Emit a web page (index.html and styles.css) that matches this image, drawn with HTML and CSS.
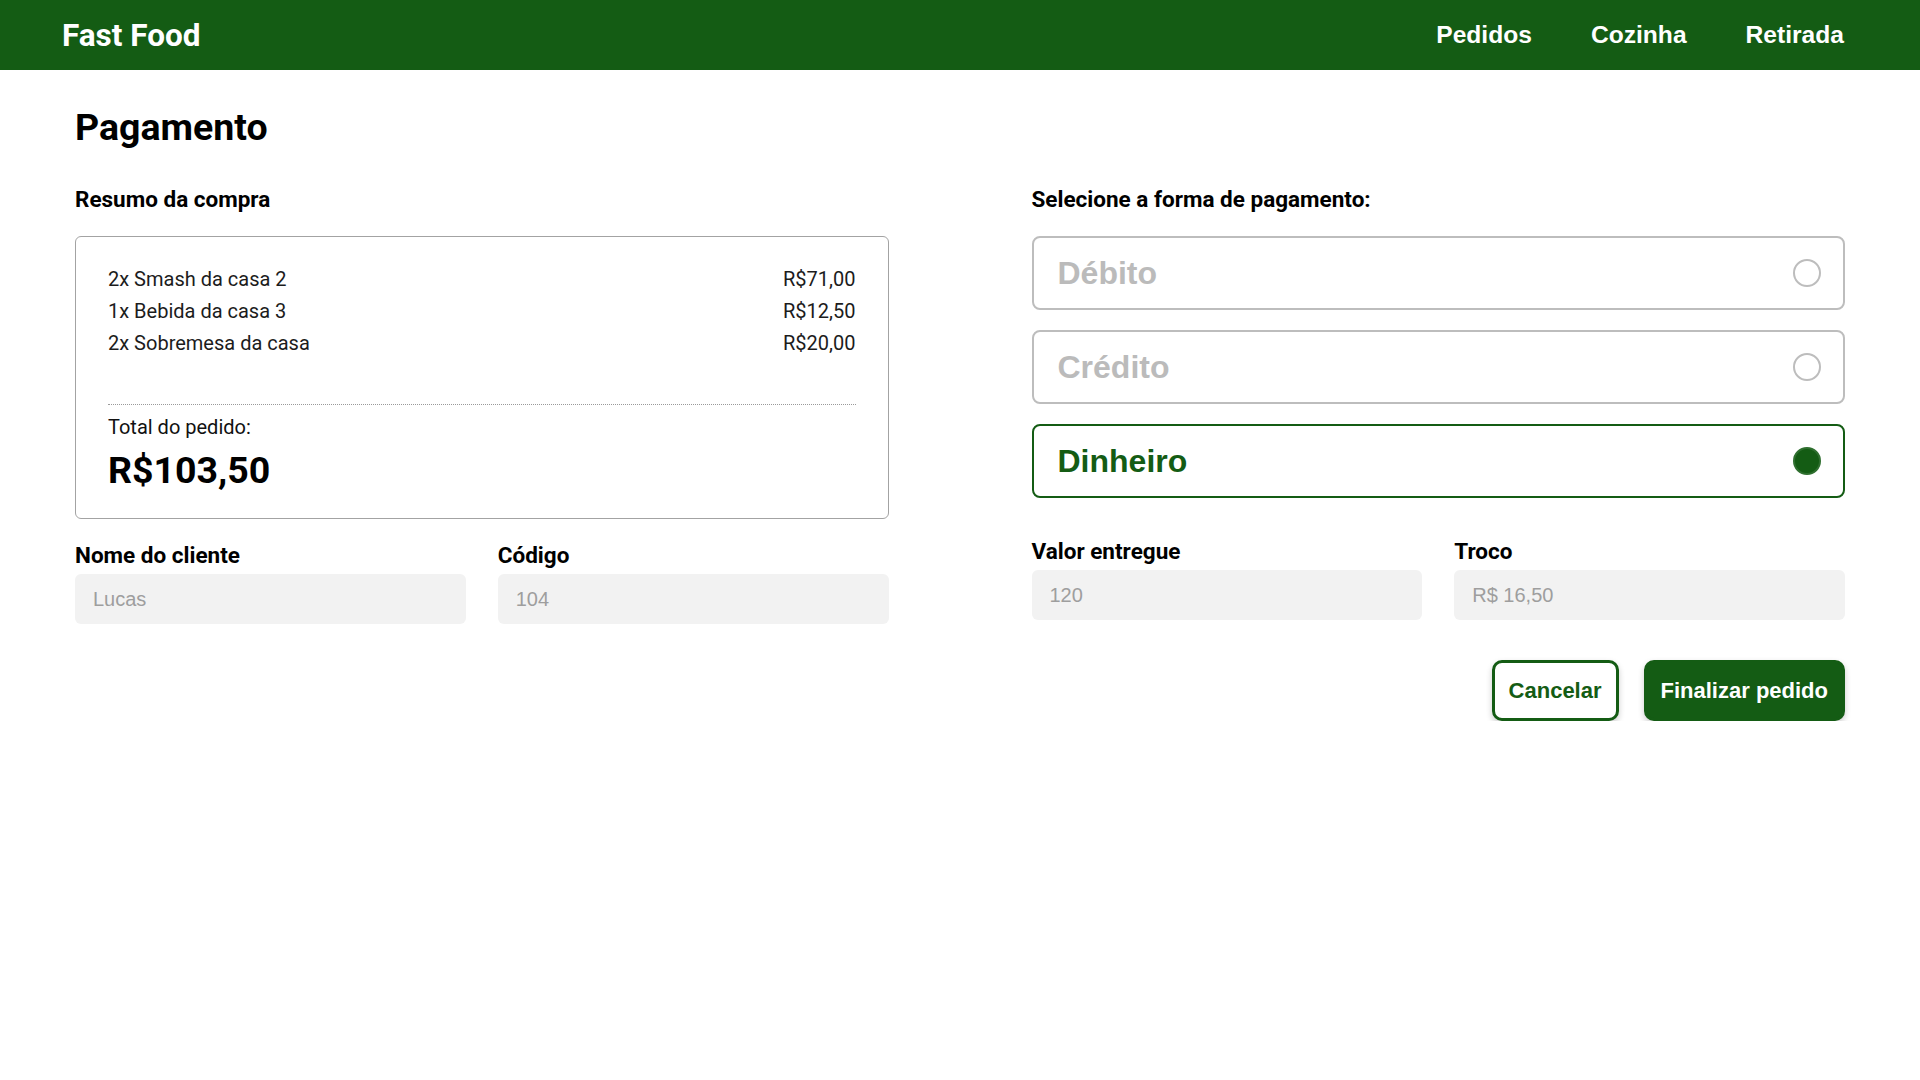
FILE: index.html
```html
<!DOCTYPE html>
<html lang="pt-BR">
<head>
<meta charset="utf-8">
<title>Fast Food - Pagamento</title>
<link rel="stylesheet" href="styles.css">
</head>
<body>
<header class="topbar">
  <div class="brand">Fast Food</div>
  <nav class="nav">
    <a class="nav-link" href="#">Pedidos</a>
    <a class="nav-link" href="#">Cozinha</a>
    <a class="nav-link" href="#">Retirada</a>
  </nav>
</header>
<main class="page">
  <h1 class="page-title">Pagamento</h1>
  <div class="columns">
    <section class="col">
      <h2 class="section-title">Resumo da compra</h2>
      <div class="summary">
        <ul class="items">
          <li class="item"><span>2x Smash da casa 2</span><span>R$71,00</span></li>
          <li class="item"><span>1x Bebida da casa 3</span><span>R$12,50</span></li>
          <li class="item"><span>2x Sobremesa da casa</span><span>R$20,00</span></li>
        </ul>
        <div class="divider"></div>
        <div class="total-label">Total do pedido:</div>
        <div class="total-value">R$103,50</div>
      </div>
      <div class="fields fields-left">
        <div class="field">
          <label class="field-label">Nome do cliente</label>
          <div class="input">Lucas</div>
        </div>
        <div class="field">
          <label class="field-label">Código</label>
          <div class="input">104</div>
        </div>
      </div>
    </section>
    <section class="col">
      <h2 class="section-title">Selecione a forma de pagamento:</h2>
      <div class="options">
        <div class="option"><span class="option-name">Débito</span><span class="radio"></span></div>
        <div class="option"><span class="option-name">Crédito</span><span class="radio"></span></div>
        <div class="option option-active"><span class="option-name">Dinheiro</span><span class="radio radio-on"></span></div>
      </div>
      <div class="fields fields-right">
        <div class="field">
          <label class="field-label">Valor entregue</label>
          <div class="input">120</div>
        </div>
        <div class="field">
          <label class="field-label">Troco</label>
          <div class="input">R$ 16,50</div>
        </div>
      </div>
      <div class="actions">
        <button class="btn btn-outline">Cancelar</button>
        <button class="btn btn-solid">Finalizar pedido</button>
      </div>
    </section>
  </div>
</main>
</body>
</html>
```
FILE: styles.css
```css
* { box-sizing: border-box; }

body {
  margin: 0;
  background: #ffffff;
  font-family: Roboto, "Liberation Sans", Arial, sans-serif;
  color: #111;
}

.topbar {
  height: 70px;
  background: #145c14;
  display: flex;
  align-items: center;
  justify-content: space-between;
  padding: 0 76px 0 62px;
}

.brand {
  font-family: Roboto, sans-serif;
  font-weight: 700;
  font-size: 31.5px;
  color: #fff;
}

.nav {
  display: flex;
  gap: 59px;
}

.nav-link {
  font-family: "Liberation Sans", Arial, sans-serif;
  font-weight: 700;
  font-size: 24.6px;
  color: #fff;
  text-decoration: none;
}

.page {
  padding: 35px 75px 0 75px;
}

.page-title {
  margin: 0;
  font-family: Roboto, sans-serif;
  font-weight: 700;
  font-size: 37.5px;
  color: #000;
}

.columns {
  margin-top: 37px;
  display: grid;
  grid-template-columns: 1fr 1fr;
  column-gap: 143px;
}

.section-title {
  margin: 0 0 24px;
  font-family: Roboto, sans-serif;
  font-weight: 700;
  font-size: 22.5px;
  color: #000;
}

.summary {
  border: 1px solid #a3a3a3;
  border-radius: 6px;
  padding: 26px 32px 26px 32px;
}

.items {
  list-style: none;
  margin: 0;
  padding: 0;
}

.item {
  display: flex;
  justify-content: space-between;
  font-size: 20px;
  line-height: 32px;
  color: #1c1c1c;
}

.divider {
  margin: 45px 0 10px;
  border-top: 1px dotted #9a9a9a;
}

.total-label {
  font-size: 20px;
  color: #111;
  margin-bottom: 9px;
}

.total-value {
  font-size: 37.5px;
  font-weight: 700;
  color: #000;
}

.fields {
  display: grid;
  grid-template-columns: 1fr 1fr;
  column-gap: 32px;
}

.fields-left { margin-top: 23px; }
.fields-right { margin-top: 40px; }

.field {
  display: flex;
  flex-direction: column;
}

.field-label {
  font-family: Roboto, sans-serif;
  font-weight: 700;
  font-size: 22.5px;
  color: #000;
  margin-bottom: 6px;
}

.input {
  height: 50px;
  background: #f2f2f2;
  border-radius: 6px;
  display: flex;
  align-items: center;
  padding: 0 18px;
  font-family: "Liberation Sans", Arial, sans-serif;
  font-size: 20px;
  color: #9e9e9e;
}

.options {
  display: flex;
  flex-direction: column;
  gap: 20px;
}

.option {
  height: 74px;
  border: 2px solid #bdbdbd;
  border-radius: 8px;
  display: flex;
  align-items: center;
  justify-content: space-between;
  padding: 0 22px 0 24px;
}

.option-name {
  font-family: "Liberation Sans", Arial, sans-serif;
  font-weight: 700;
  font-size: 32px;
  color: #bbbbbb;
}

.option-active {
  border-color: #145c14;
}

.option-active .option-name {
  color: #145c14;
}

.radio {
  width: 28px;
  height: 28px;
  border-radius: 50%;
  border: 2px solid #bdbdbd;
}

.radio-on {
  background: #145c14;
  border-color: #2f6f2f;
}

.actions {
  margin-top: 40px;
  display: flex;
  justify-content: flex-end;
  gap: 25px;
}

.btn {
  height: 61px;
  border: 3px solid #145c14;
  border-radius: 10px;
  padding: 0 14px;
  font-family: "Liberation Sans", Arial, sans-serif;
  font-weight: 700;
  font-size: 22px;
  box-shadow: 0 3px 6px rgba(0, 0, 0, 0.2);
  cursor: pointer;
}

.btn-outline {
  background: #fff;
  color: #145c14;
}

.btn-solid {
  background: #145c14;
  color: #fff;
}
```
